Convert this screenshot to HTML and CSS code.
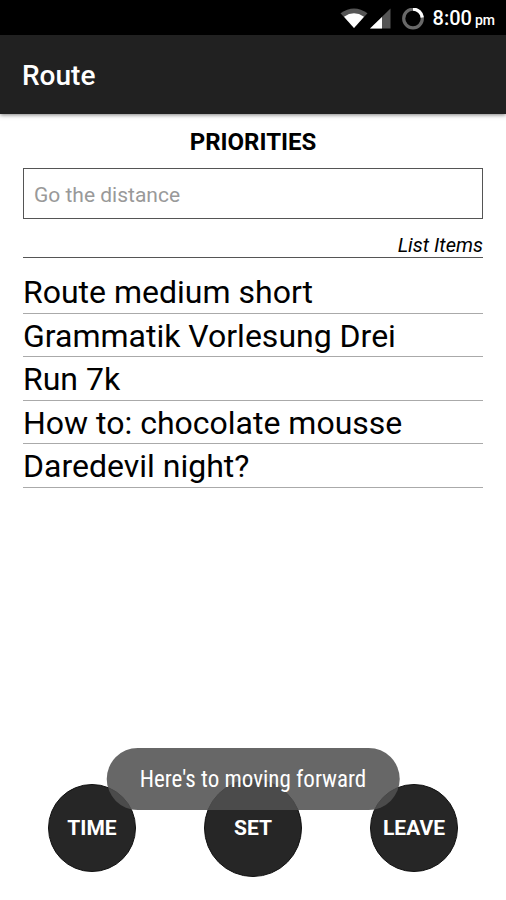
FILE: index.html
```
<!DOCTYPE html>
<html lang="en">
<head>
    <meta charset="UTF-8">
    <meta name="viewport" content="width=device-width, initial-scale=1.0">
    <title>Route</title>
    <link rel="stylesheet" href="styles.css">
</head>
<body>
    <div class="status-bar">
        <svg class="icon-wifi" width="28" height="22" viewBox="0 0 28 22">
            <path d="M0.5 5.2 Q14 -4.2 27.5 5.2 L14 20 Z" fill="#555"/>
            <path d="M4 8.7 Q14 2 24 8.7 L14 20 Z" fill="#fff"/>
        </svg>
        <svg class="icon-signal" width="21" height="22" viewBox="0 0 21 22">
            <path d="M20.5 0.5 V20.5 H0 Z" fill="#555"/>
            <path d="M12 9 V20.5 H0 Z" fill="#fff"/>
        </svg>
        <svg class="icon-battery" width="22" height="22" viewBox="0 0 22 22">
            <circle cx="11" cy="10.5" r="9.3" fill="none" stroke="#686868" stroke-width="3.2"/>
            <path d="M11 1.2 A9.3 9.3 0 0 1 20.3 9.5" fill="none" stroke="#fff" stroke-width="3.2"/>
        </svg>
        <span class="clock">8:00 <small>pm</small></span>
    </div>

    <header class="app-bar">
        <h1>Route</h1>
    </header>

    <main class="content">
        <label class="title" for="new-item">PRIORITIES</label>
        <input id="new-item" class="new-item" type="text" placeholder="Go the distance">
        <h2 class="list-title">List Items</h2>
        <ul class="list">
            <li>Route medium short</li>
            <li>Grammatik Vorlesung Drei</li>
            <li>Run 7k</li>
            <li>How to: chocolate mousse</li>
            <li>Daredevil night?</li>
        </ul>
    </main>

    <footer class="actions">
        <button type="button" class="round-btn">TIME</button>
        <button type="button" class="round-btn round-btn-big">SET</button>
        <button type="button" class="round-btn">LEAVE</button>
        <div class="toast" role="status">Here's to moving forward</div>
    </footer>
</body>
</html>
```
FILE: styles.css
```
* {
    box-sizing: border-box;
}

body {
    margin: 0;
    min-height: 100vh;
    display: flex;
    flex-direction: column;
    background-color: #fff;
    color: #000;
    font-family: Roboto, sans-serif;
}

/* status bar */
.status-bar {
    display: flex;
    align-items: center;
    justify-content: flex-end;
    height: 35px;
    padding: 2px 11px 0 0;
    background-color: #000;
    color: #fff;
}

.icon-signal {
    margin-left: 2px;
}

.icon-battery {
    margin-left: 11px;
}

.clock {
    margin-left: 9px;
    font-size: 20px;
    font-weight: 500;
    line-height: 24px;
}

.clock small {
    margin-left: -2px;
    font-size: 14px;
}

/* app bar */
.app-bar {
    display: flex;
    align-items: center;
    height: 79px;
    padding: 2px 22px 0;
    background-color: #212121;
    color: #fff;
    box-shadow: 0 1px 4px rgba(0, 0, 0, 0.5);
}

.app-bar h1 {
    margin: 0;
    font-size: 28px;
    font-weight: 500;
    line-height: 32px;
}

.content {
    flex: 1;
    padding: 14px 23px 0;
}

.title {
    display: block;
    font-size: 24px;
    font-weight: 700;
    line-height: 28px;
    text-align: center;
}

.new-item {
    display: block;
    width: 100%;
    height: 51px;
    margin: 12px 0 14px;
    padding: 2px 10px 0;
    border: 1px solid #555;
    border-radius: 0;
    background-color: #fff;
    color: #000;
    font-family: inherit;
    font-size: 21px;
}

.new-item::placeholder {
    color: #999;
    opacity: 1;
}

.list-title {
    margin: 0;
    border-bottom: 1px solid #555;
    font-size: 20px;
    font-style: italic;
    font-weight: 400;
    line-height: 24px;
    text-align: right;
}

.list {
    display: grid;
    grid-auto-rows: 1fr;
    min-height: 218px;
    margin: 12px 0 0;
    padding: 0;
    list-style: none;
}

.list li {
    padding-top: 2px;
    border-bottom: 1px solid #aaa;
    font-size: 32px;
    line-height: 40px;
}

/* bottom buttons */
.actions {
    position: relative;
    display: flex;
    align-items: center;
    justify-content: space-between;
    padding: 0 48px 23px;
}

.round-btn {
    width: 88px;
    height: 88px;
    padding: 0;
    border: 1px solid #111;
    border-radius: 50%;
    background-color: #262626;
    color: #fff;
    font-family: inherit;
    font-size: 21px;
    font-weight: 700;
}

.round-btn-big {
    width: 98px;
    height: 98px;
}

.toast {
    position: absolute;
    bottom: 90px;
    left: 50%;
    transform: translateX(-50%);
    padding: 18px 33px 16px;
    border-radius: 31px;
    background-color: rgba(80, 80, 80, 0.87);
    color: #fff;
    font-family: "Roboto Condensed", Roboto, sans-serif;
    font-size: 23px;
    line-height: 28px;
    white-space: nowrap;
}
```
